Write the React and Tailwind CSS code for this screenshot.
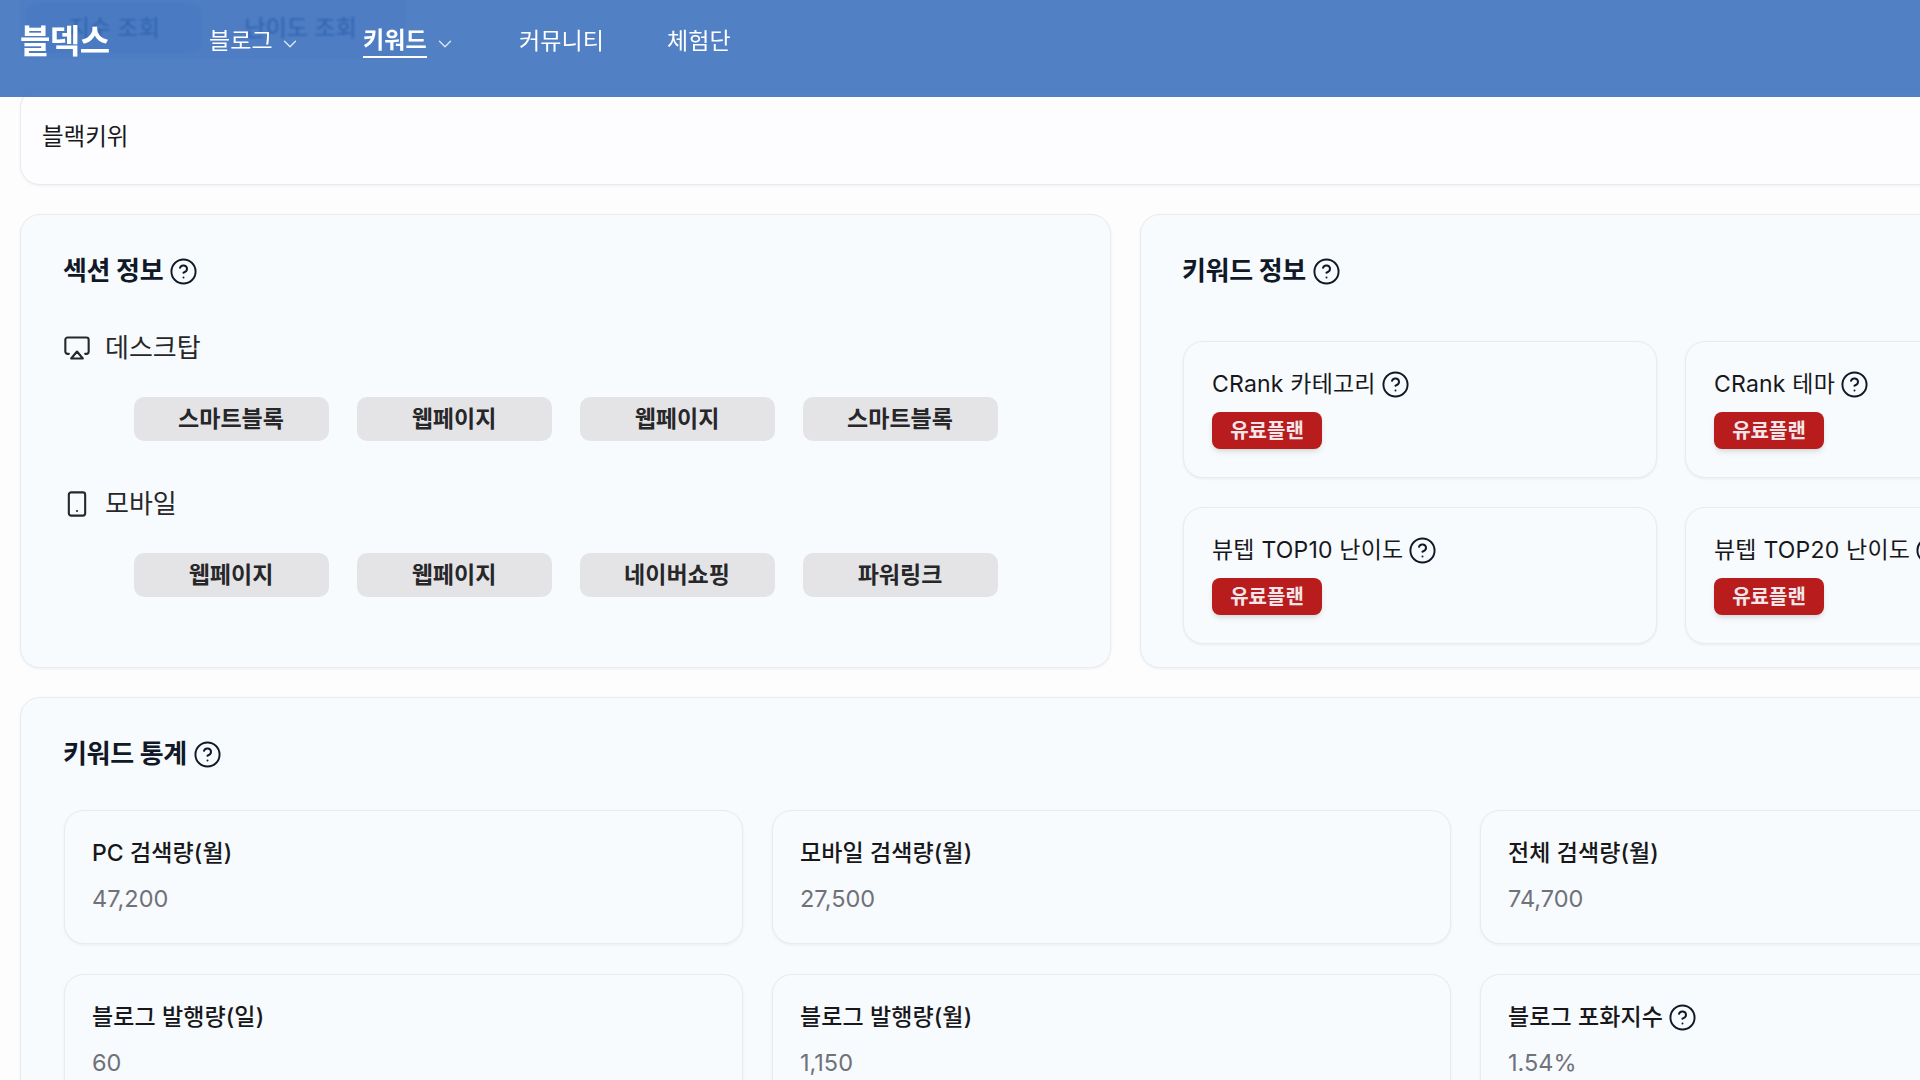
import { Airplay, ChevronDown, CircleHelp, Smartphone } from 'lucide-react';

const desktopTags = ['스마트블록', '웹페이지', '웹페이지', '스마트블록'];
const mobileTags = ['웹페이지', '웹페이지', '네이버쇼핑', '파워링크'];
const planCards = [
  ['CRank 카테고리', 'CRank 테마'],
  ['뷰텝 TOP10 난이도', '뷰텝 TOP20 난이도'],
];
const stats = [
  [
    { label: 'PC 검색량(월)', value: '47,200' },
    { label: '모바일 검색량(월)', value: '27,500' },
    { label: '전체 검색량(월)', value: '74,700' },
  ],
  [
    { label: '블로그 발행량(일)', value: '60' },
    { label: '블로그 발행량(월)', value: '1,150' },
    { label: '블로그 포화지수', value: '1.54%', help: true },
  ],
];

function Help() {
  return <CircleHelp size={29} strokeWidth={1.6} className="shrink-0 text-[#111827]" />;
}

function SectionTitle({ children }) {
  return (
    <h2 className="-ml-[1px] flex items-center gap-[6px] text-[26px] leading-[32px] font-bold text-[#111827] tracking-[-0.3px]">
      {children}
      <Help />
    </h2>
  );
}

function Tag({ children }) {
  return (
    <div className="flex h-[44px] w-[195px] items-center justify-center rounded-[10px] bg-[#e4e4e7] text-[23px] font-semibold text-[#27272a]">
      {children}
    </div>
  );
}

function PlanCard({ label }) {
  return (
    <div className="h-[137px] w-[474px] shrink-0 rounded-[20px] border border-[#e9ebee] bg-[#f7fbfe] px-[28px] pt-[26px] shadow-[0_1px_3px_rgba(0,0,0,0.06)]">
      <div className="flex h-[32px] items-center gap-[5px] whitespace-nowrap text-[23px] text-[#18181b] tracking-[0.2px]">
        {label}
        <Help />
      </div>
      <div className="mt-[12px] flex h-[37px] w-[110px] items-center justify-center rounded-[8px] bg-[#b91c1c] text-[20px] font-semibold text-[#f3e6ea] shadow-md">
        유료플랜
      </div>
    </div>
  );
}

function StatCard({ label, value, help }) {
  return (
    <div className="h-[134px] w-[679px] shrink-0 rounded-[20px] border border-[#e9ebee] bg-[#f7fbfe] px-[27px] pt-[26px] shadow-[0_1px_3px_rgba(0,0,0,0.06)]">
      <div className="flex h-[32px] items-center gap-[5px] text-[23px] font-medium text-[#18181b] tracking-[0.1px]">
        {label}
        {help && <Help />}
      </div>
      <div className="mt-[14px] text-[23.5px] leading-[32px] text-[#71717a]">{value}</div>
    </div>
  );
}

export default function App() {
  return (
    <div className="relative h-[1080px] w-[1920px] overflow-hidden bg-[#fdfdfe] font-['Inter','Noto_Sans_CJK_KR',sans-serif]">
      {/* 스크롤된 헤더: 뒤쪽 탭이 비쳐 보인다 */}
      <header className="absolute top-0 left-0 z-10 flex h-[97px] w-full items-start bg-[#336abb]/85 pl-[20px] text-white backdrop-blur-[1px]">
        <div className="mt-[22px] w-[189px] text-[33px] leading-[38px] font-bold tracking-[-0.5px]">블덱스</div>
        <nav className="mt-[24px] flex items-center text-[23px] leading-[32px] tracking-[0.1px]">
          <div className="flex w-[154px] items-center gap-[6px]">
            블로그
            <ChevronDown size={22} strokeWidth={1.5} className="mt-[6px] text-white/80" />
          </div>
          <div className="flex w-[156px] items-center gap-[7px]">
            <span className="border-b-2 border-white font-bold">키워드</span>
            <ChevronDown size={22} strokeWidth={1.5} className="mt-[6px] text-white/80" />
          </div>
          <div className="w-[148px]">커뮤니티</div>
          <div>체험단</div>
        </nav>
      </header>

      <main className="flex flex-col px-[20px]">
        <div className="flex h-[59px] w-[385px] rounded-b-[14px] bg-[#1e3a6e]/10 px-[6px] pt-[3px] text-[23px] text-[#1e3a6e]">
          <div className="flex h-[50px] w-[176px] items-center justify-center rounded-[12px] bg-[#1e3a6e]/10">지수 조회</div>
          <div className="flex h-[50px] flex-1 items-center justify-center">난이도 조회</div>
        </div>

        <div className="mt-[29px] flex h-[97px] w-[2180px] items-center rounded-[20px] border border-[#e9ebee] bg-[#fdfdff] pl-[21px] text-[23.5px] text-[#18181b] shadow-[0_1px_3px_rgba(0,0,0,0.06)]">
          블랙키위
        </div>

        <div className="mt-[29px] flex gap-[29px]">
          <section className="h-[454px] w-[1091px] shrink-0 rounded-[20px] border border-[#e9ebee] bg-[#f7fbfe] px-[43px] pt-[40px] shadow-[0_1px_3px_rgba(0,0,0,0.06)]">
            <SectionTitle>섹션 정보</SectionTitle>
            <div className="mt-[45px] -ml-[1px] flex items-center gap-[14px] text-[26px] leading-[32px] text-[#27272a]">
              <Airplay size={28} strokeWidth={1.8} />
              데스크탑
            </div>
            <div className="mt-[33px] flex gap-[28px] pl-[69.5px]">
              {desktopTags.map((tag, i) => <Tag key={i}>{tag}</Tag>)}
            </div>
            <div className="mt-[47px] -ml-[1px] flex items-center gap-[14px] text-[26px] leading-[32px] text-[#27272a]">
              <Smartphone size={28} strokeWidth={1.8} />
              모바일
            </div>
            <div className="mt-[33px] flex gap-[28px] pl-[69.5px]">
              {mobileTags.map((tag, i) => <Tag key={i}>{tag}</Tag>)}
            </div>
          </section>

          <section className="h-[454px] w-[1060px] shrink-0 rounded-[20px] border border-[#e9ebee] bg-[#f7fbfe] px-[42px] pt-[40px] shadow-[0_1px_3px_rgba(0,0,0,0.06)]">
            <SectionTitle>키워드 정보</SectionTitle>
            <div className="mt-[54px] flex flex-col gap-[29px]">
              {planCards.map((row) => (
                <div key={row[0]} className="flex gap-[28px]">
                  {row.map((label) => <PlanCard key={label} label={label} />)}
                </div>
              ))}
            </div>
          </section>
        </div>

        <section className="mt-[29px] h-[500px] w-[2180px] rounded-[20px] border border-[#e9ebee] bg-[#f7fbfe] px-[43px] pt-[40px] shadow-[0_1px_3px_rgba(0,0,0,0.06)]">
          <SectionTitle>키워드 통계</SectionTitle>
          <div className="mt-[40px] flex flex-col gap-[30px]">
            {stats.map((row) => (
              <div key={row[0].label} className="flex gap-[29px]">
                {row.map((s) => <StatCard key={s.label} {...s} />)}
              </div>
            ))}
          </div>
        </section>
      </main>
    </div>
  );
}
